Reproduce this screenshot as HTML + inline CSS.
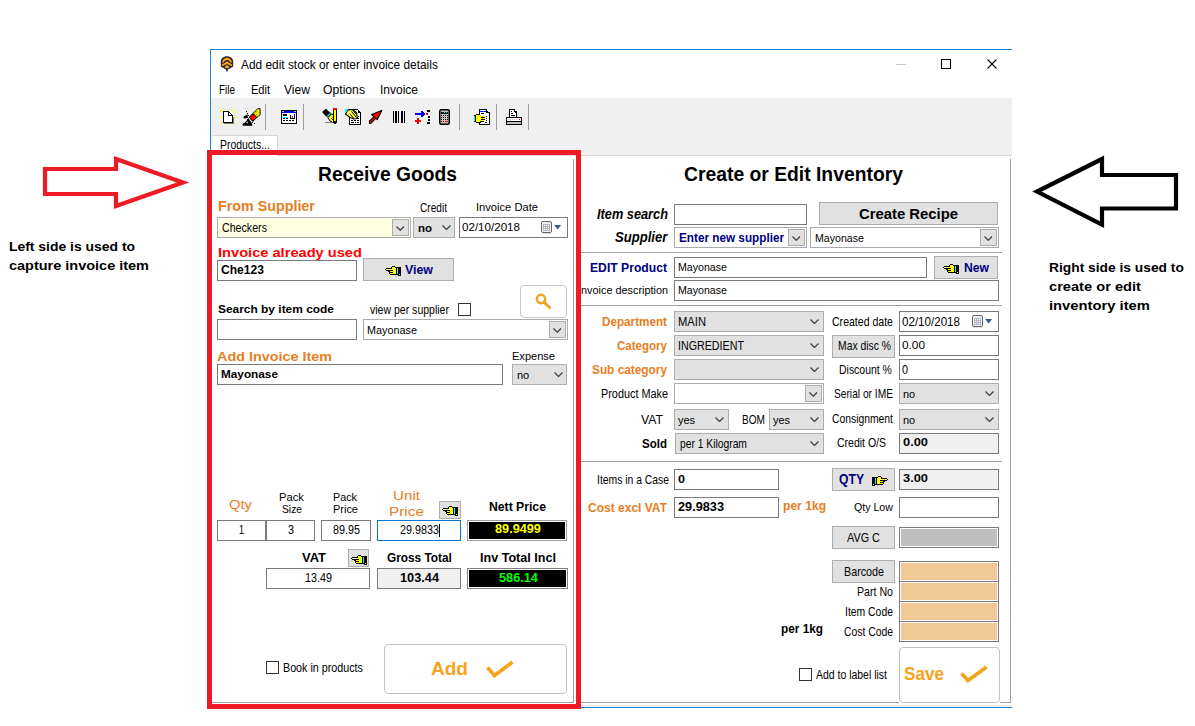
<!DOCTYPE html>
<html><head><meta charset="utf-8">
<style>
*{box-sizing:border-box;margin:0;padding:0}
html,body{width:1195px;height:726px;overflow:hidden;background:#fff;font-family:"Liberation Sans",sans-serif;color:#000;position:relative}
.t{position:absolute;white-space:nowrap;line-height:1;transform-origin:0 0}
.r{position:absolute}
</style></head><body>
<svg class="r" style="left:0;top:0" width="1195" height="726">
<polygon points="45,169 116,169 116,159 183,182.5 116,206 116,194 45,194" fill="none" stroke="#ed1c24" stroke-width="4.2" stroke-linejoin="miter"/>
<polygon points="1176,175 1102,175 1102,159 1037,191.5 1102,224.5 1102,208.5 1176,208.5" fill="none" stroke="#000" stroke-width="4.2" stroke-linejoin="miter"/>
</svg>
<div class="t" style="left:9.00px;top:240.25px;font-size:13.52px;font-weight:bold;font-style:normal;color:#000;transform:scaleX(1.0294)">Left side is used to</div>
<div class="t" style="left:9.00px;top:259.05px;font-size:13.52px;font-weight:bold;font-style:normal;color:#000;transform:scaleX(1.0710)">capture invoice item</div>
<div class="t" style="left:1049.00px;top:261.18px;font-size:13.37px;font-weight:bold;font-style:normal;color:#000;transform:scaleX(1.0323)">Right side is used to</div>
<div class="t" style="left:1049.00px;top:279.98px;font-size:13.37px;font-weight:bold;font-style:normal;color:#000;transform:scaleX(1.0955)">create or edit</div>
<div class="t" style="left:1049.00px;top:299.18px;font-size:13.37px;font-weight:bold;font-style:normal;color:#000;transform:scaleX(1.1050)">inventory item</div>
<div class="r" style="left:210px;top:49px;width:802px;height:1px;background:#1883d7;"></div>
<div class="r" style="left:210px;top:49px;width:1px;height:659px;background:#1883d7;"></div>
<div class="r" style="left:210px;top:707px;width:802px;height:1px;background:#1883d7;"></div>
<div class="r" style="left:211px;top:705px;width:801px;height:2px;background:#f0f0f0;"></div>
<svg class="r" style="left:217px;top:54px" width="20" height="20" viewBox="0 0 20 20">
<path d="M10,2.2 C13.6,2.2 16.2,4.6 16.2,7.6 L16.2,12.6 L11,15.4 L10.6,17.6 L9.4,17.6 L9,15.4 L3.8,12.6 L3.8,7.6 C3.8,4.6 6.4,2.2 10,2.2 Z" fill="#2e2536"/>
<path d="M5.1,8.2 C5.8,5.2 7.8,3.7 10,3.7 C12.2,3.7 14.2,5.2 14.9,8.2 L13.6,8.8 C12.6,6.8 11.4,6.1 10,6.1 C8.6,6.1 7.4,6.8 6.4,8.8 Z" fill="#f7a81b"/>
<path d="M4.9,10.6 L10,7.5 L15.1,10.6 L15.1,12.3 L10,10.0 L4.9,12.3 Z" fill="#f7a81b"/>
<path d="M8,13.4 C8,12 9,11.3 10,11.3 C11,11.3 12,12 12,13.4 L10,14.4 Z" fill="#f7a81b"/></svg>
<div class="t" style="left:241.00px;top:58.54px;font-size:12.35px;font-weight:normal;font-style:normal;color:#000;transform:scaleX(0.9626)">Add edit stock or enter invoice details</div>
<div class="r" style="left:896px;top:64px;width:10px;height:1px;background:#c8c8c8;"></div>
<div class="r" style="left:941px;top:59px;width:10px;height:10px;background:transparent;border:1px solid #000;"></div>
<svg class="r" style="left:987px;top:59px" width="10" height="10"><path d="M0.5,0.5 L9.5,9.5 M9.5,0.5 L0.5,9.5" stroke="#000" stroke-width="1.1"/></svg>
<div class="t" style="left:219.00px;top:83.54px;font-size:12.35px;font-weight:normal;font-style:normal;color:#000;transform:scaleX(0.8044)">File</div>
<div class="t" style="left:251.00px;top:83.54px;font-size:12.35px;font-weight:normal;font-style:normal;color:#000;transform:scaleX(0.8915)">Edit</div>
<div class="t" style="left:284.00px;top:83.54px;font-size:12.35px;font-weight:normal;font-style:normal;color:#000;transform:scaleX(0.9788)">View</div>
<div class="t" style="left:323.00px;top:83.54px;font-size:12.35px;font-weight:normal;font-style:normal;color:#000;transform:scaleX(0.9868)">Options</div>
<div class="t" style="left:380.00px;top:83.54px;font-size:12.35px;font-weight:normal;font-style:normal;color:#000;transform:scaleX(0.9703)">Invoice</div>
<div class="r" style="left:211px;top:98px;width:801px;height:57px;background:#f0f0f0;"></div>
<div class="r" style="left:211px;top:155px;width:801px;height:1px;background:#d9d9d9;"></div>
<div class="r" style="left:265px;top:104px;width:1px;height:26px;background:#a0a0a0;"></div>
<div class="r" style="left:303px;top:104px;width:1px;height:26px;background:#a0a0a0;"></div>
<div class="r" style="left:459px;top:104px;width:1px;height:26px;background:#a0a0a0;"></div>
<div class="r" style="left:496px;top:104px;width:1px;height:26px;background:#a0a0a0;"></div>
<div class="r" style="left:528px;top:104px;width:1px;height:26px;background:#a0a0a0;"></div>
<div class="r" style="left:212px;top:136px;width:65px;height:20px;background:#fff;"></div>
<div class="r" style="left:212px;top:135px;width:66px;height:1px;background:#d9d9d9;"></div>
<div class="r" style="left:277px;top:135px;width:1px;height:20px;background:#d9d9d9;"></div>
<div class="t" style="left:220.00px;top:139.29px;font-size:12.06px;font-weight:normal;font-style:normal;color:#000;transform:scaleX(0.8671)">Products...</div>
<svg class="r" style="left:219px;top:108px" width="18" height="18" viewBox="0 0 18 18" shape-rendering="crispEdges"><rect x="1" y="1" width="2" height="1" fill="#ffff00"/><rect x="2" y="2" width="2" height="1" fill="#ffff00"/><rect x="3" y="3" width="1" height="1" fill="#ffff00"/><rect x="8" y="1" width="1" height="2" fill="#ffff00"/><rect x="16" y="1" width="1" height="1" fill="#ffff00"/><rect x="15" y="2" width="1" height="1" fill="#ffff00"/><rect x="14" y="3" width="1" height="1" fill="#ffff00"/><rect x="13" y="4" width="1" height="1" fill="#ffff00"/><rect x="1" y="9" width="3" height="1" fill="#ffff00"/><rect x="15" y="9" width="3" height="1" fill="#ffff00"/><rect x="1" y="15" width="1" height="1" fill="#ffff00"/><rect x="2" y="14" width="1" height="1" fill="#ffff00"/><rect x="8" y="15" width="1" height="2" fill="#ffff00"/><rect x="16" y="15" width="1" height="1" fill="#ffff00"/><rect x="15" y="14" width="1" height="1" fill="#ffff00"/><rect x="4" y="3" width="6" height="12" fill="#fff"/><rect x="10" y="5" width="4" height="10" fill="#fff"/><rect x="10" y="4" width="1" height="1" fill="#fff"/><rect x="11" y="5" width="0" height="0" fill="#fff"/><rect x="4" y="3" width="6" height="1" fill="#000"/><rect x="4" y="3" width="1" height="12" fill="#000"/><rect x="4" y="14" width="10" height="1" fill="#000"/><rect x="13" y="8" width="1" height="7" fill="#000"/><rect x="9" y="3" width="1" height="5" fill="#000"/><rect x="9" y="7" width="5" height="1" fill="#000"/><rect x="10" y="4" width="1" height="1" fill="#000"/><rect x="11" y="5" width="1" height="1" fill="#000"/><rect x="12" y="6" width="1" height="1" fill="#000"/><rect x="13" y="7" width="1" height="1" fill="#000"/><rect x="5" y="15" width="10" height="1" fill="#808080"/><rect x="14" y="9" width="1" height="7" fill="#808080"/></svg>
<svg class="r" style="left:241px;top:106px" width="21" height="21" viewBox="0 0 21 21" shape-rendering="crispEdges"><g shape-rendering="auto"><polygon points="8.3,11.3 16.5,2.8 19,2.5 19.2,8.5 11.8,15.2" fill="#ffff00" stroke="#000" stroke-width="1"/><polygon points="8.3,11.3 12.2,7.6 15.7,11.3 11.8,15.2" fill="#ff0000" stroke="#000" stroke-width="1"/><path d="M13,8.5 L17,4.5 M14.5,10 L18.5,6" stroke="#000" stroke-width="0.7" stroke-dasharray="1 1"/><path d="M4,17.5 C2,17.5 2,19 2.5,19 L10.5,19 C10.5,17 8.5,16 7.5,13.5 C6,15.5 5.5,16.5 4,17.5 Z" fill="#000" stroke="#000" stroke-width="1.6"/><path d="M5,16.8 L6.8,15.2 L6.5,17.5 Z" fill="#fff"/><path d="M3.2,11.2 L6,9.5 L5.8,11.5 L3.5,11.8 Z" fill="#000" stroke="#000" stroke-width="1.4"/></g><rect x="5" y="5" width="1" height="1" fill="#000"/><rect x="6" y="7" width="1" height="1" fill="#000"/><rect x="7" y="9" width="1" height="1" fill="#000"/><rect x="6" y="11" width="1" height="1" fill="#000"/><rect x="6" y="13" width="1" height="1" fill="#000"/><rect x="11" y="16" width="1" height="1" fill="#000"/><rect x="13" y="17" width="1" height="1" fill="#000"/></svg>
<svg class="r" style="left:281px;top:110px" width="16" height="14" viewBox="0 0 16 14" shape-rendering="crispEdges"><rect x="0" y="0" width="16" height="14" fill="#000"/><rect x="1" y="1" width="14" height="12" fill="#fff"/><rect x="1" y="1" width="14" height="2" fill="#0000ff"/><rect x="1" y="1" width="2" height="1" fill="#c0c0c0"/><rect x="13" y="1" width="2" height="1" fill="#c0c0c0"/><rect x="2" y="4" width="4" height="2" fill="#000"/><rect x="2" y="8" width="2" height="1" fill="#000"/><rect x="5" y="8" width="2" height="1" fill="#000"/><rect x="2" y="10" width="2" height="1" fill="#000"/><rect x="5" y="10" width="2" height="1" fill="#000"/><rect x="8" y="10" width="2" height="1" fill="#000"/><rect x="11" y="10" width="2" height="1" fill="#000"/><rect x="9" y="5" width="1" height="4" fill="#000"/><rect x="9" y="8" width="5" height="1" fill="#000"/><rect x="2" y="7" width="5" height="1" fill="#00ffff"/><rect x="11" y="6" width="1" height="2" fill="#ff0000"/><rect x="13" y="4" width="1" height="4" fill="#0000ff"/></svg>
<svg class="r" style="left:322px;top:108px" width="16" height="16" viewBox="0 0 16 16" shape-rendering="crispEdges"><g shape-rendering="auto"><path d="M1,4 L4,1.5 L7,4.5 L4,7.5 Z" fill="#000" stroke="#000" stroke-width="1.2"/><path d="M4.5,8 L8,4.5 L9.5,6 L6,9.5 Z" fill="#00e0e0" stroke="#000" stroke-width="0.8"/><path d="M6,9.5 L9.5,6 L12,7 L12.5,12 L11,14.5 L8,13 Z" fill="#ffff40" stroke="#000" stroke-width="1"/><path d="M9,10 L11,12 M10,8.5 L12,10.5" stroke="#000" stroke-width="0.8"/></g><rect x="11" y="1" width="4" height="14" fill="#000"/><rect x="12" y="2" width="2" height="11" fill="#ffff00"/><rect x="11" y="0" width="4" height="2" fill="#ff0000"/><rect x="12" y="15" width="2" height="1" fill="#000"/><rect x="3" y="14" width="8" height="1" fill="#808080"/></svg>
<svg class="r" style="left:343px;top:108px" width="18" height="17" viewBox="0 0 18 17" shape-rendering="crispEdges"><rect x="6" y="1" width="12" height="16" fill="#000"/><rect x="7" y="2" width="10" height="14" fill="#fff"/><rect x="15" y="1" width="3" height="1" fill="#f0f0f0"/><rect x="16" y="2" width="2" height="1" fill="#f0f0f0"/><rect x="17" y="3" width="1" height="1" fill="#f0f0f0"/><rect x="14" y="1" width="1" height="1" fill="#000"/><rect x="15" y="2" width="1" height="1" fill="#000"/><rect x="16" y="3" width="1" height="1" fill="#000"/><rect x="17" y="4" width="1" height="1" fill="#000"/><rect x="15" y="3" width="1" height="2" fill="#000"/><rect x="15" y="4" width="2" height="1" fill="#000"/><rect x="15" y="8" width="1" height="1" fill="#000"/><rect x="15" y="10" width="1" height="1" fill="#000"/><rect x="8" y="12" width="2" height="1" fill="#000"/><rect x="11" y="12" width="2" height="1" fill="#000"/><rect x="14" y="12" width="2" height="1" fill="#000"/><rect x="8" y="14" width="3" height="1" fill="#000"/><rect x="12" y="14" width="1" height="1" fill="#000"/><rect x="14" y="14" width="2" height="1" fill="#000"/><g shape-rendering="auto"><polygon points="2,1 6,1 2,5" fill="#00ffff"/><polygon points="5.5,1.8 9.5,1.5 13.5,4.5 14.5,10.5 11,11 7,9.5 2.5,6" fill="#ffff40" stroke="#000" stroke-width="1.1" stroke-linejoin="round"/><path d="M8.5,3.5 L13.5,9.5 M6.5,5.5 L11,10.5 M10,2.5 L13,6" stroke="#000" stroke-width="1"/><path d="M4,3 L6,5.5 L8,4 L7,7" fill="none" stroke="#fff" stroke-width="0.6" opacity="0.6"/></g></svg>
<svg class="r" style="left:369px;top:110px" width="14" height="14" viewBox="0 0 14 14" shape-rendering="crispEdges"><g shape-rendering="auto"><path d="M1.2,12.2 L6.5,7" stroke="#000" stroke-width="3.6" stroke-linecap="round"/><path d="M1.2,12.2 L6.5,7" stroke="#ff0000" stroke-width="1.6" stroke-linecap="round"/><polygon points="12.8,0.6 2.6,4.6 8.3,9.6" fill="#ff0000" stroke="#000" stroke-width="1.1" stroke-linejoin="round"/></g></svg>
<svg class="r" style="left:393px;top:111px" width="12" height="12" viewBox="0 0 12 12" shape-rendering="crispEdges"><rect x="0" y="0" width="1" height="12" fill="#000"/><rect x="2" y="0" width="2" height="12" fill="#000"/><rect x="5" y="0" width="1" height="12" fill="#000"/><rect x="8" y="0" width="2" height="12" fill="#000"/><rect x="11" y="0" width="1" height="12" fill="#000"/></svg>
<svg class="r" style="left:415px;top:110px" width="15" height="14" viewBox="0 0 15 14" shape-rendering="crispEdges"><rect x="0" y="3" width="8" height="2" fill="#0000ff"/><rect x="6" y="1" width="2" height="6" fill="#0000ff"/><rect x="8" y="2" width="1" height="4" fill="#0000ff"/><rect x="9" y="3" width="1" height="2" fill="#0000ff"/><rect x="11" y="3" width="2" height="2" fill="#ff0000"/><rect x="12" y="0" width="3" height="2" fill="#000"/><rect x="13" y="6" width="2" height="2" fill="#000"/><rect x="13" y="9" width="2" height="2" fill="#000"/><rect x="12" y="12" width="3" height="2" fill="#000"/><rect x="2" y="8" width="2" height="6" fill="#ff0000"/><rect x="0" y="10" width="6" height="2" fill="#ff0000"/></svg>
<svg class="r" style="left:439px;top:109px" width="11" height="16" viewBox="0 0 11 16" shape-rendering="crispEdges"><rect x="0.75" y="0.75" width="9.5" height="14.5" rx="1.5" fill="#c0c0c0" stroke="#000" stroke-width="1.5" shape-rendering="auto"/><rect x="2" y="3" width="7" height="2" fill="#000"/><rect x="5" y="3" width="1" height="1" fill="#00ffff"/><rect x="7" y="3" width="1" height="1" fill="#00ffff"/><rect x="2" y="6" width="1" height="1" fill="#000"/><rect x="4" y="6" width="1" height="1" fill="#000"/><rect x="6" y="6" width="1" height="1" fill="#000"/><rect x="8" y="6" width="1" height="1" fill="#000"/><rect x="2" y="8" width="1" height="1" fill="#000"/><rect x="4" y="8" width="1" height="1" fill="#000"/><rect x="6" y="8" width="1" height="1" fill="#000"/><rect x="8" y="8" width="1" height="1" fill="#000"/><rect x="2" y="10" width="1" height="1" fill="#000"/><rect x="4" y="10" width="1" height="1" fill="#000"/><rect x="6" y="10" width="1" height="1" fill="#000"/><rect x="8" y="10" width="1" height="1" fill="#000"/><rect x="2" y="12" width="1" height="1" fill="#000"/><rect x="4" y="12" width="1" height="1" fill="#000"/><rect x="6" y="12" width="3" height="1" fill="#ff0000"/></svg>
<svg class="r" style="left:474px;top:109px" width="16" height="16" viewBox="0 0 16 16" shape-rendering="crispEdges"><rect x="5" y="0" width="11" height="16" fill="#000"/><rect x="6" y="1" width="9" height="14" fill="#fff"/><rect x="13" y="0" width="3" height="3" fill="#f0f0f0"/><rect x="12" y="1" width="1" height="3" fill="#000"/><rect x="12" y="3" width="3" height="1" fill="#000"/><rect x="13" y="2" width="1" height="1" fill="#000"/><rect x="6" y="2" width="6" height="1" fill="#0000ff"/><rect x="7" y="4" width="3" height="1" fill="#000"/><rect x="12" y="7" width="1" height="1" fill="#000"/><rect x="12" y="9" width="1" height="1" fill="#000"/><rect x="12" y="11" width="1" height="1" fill="#000"/><rect x="11" y="13" width="2" height="1" fill="#000"/><rect x="0" y="6" width="2" height="7" fill="#000"/><rect x="0" y="7" width="1" height="5" fill="#00ffff"/><rect x="2" y="6" width="5" height="7" fill="#ffff00"/><rect x="7" y="7" width="3" height="1" fill="#ffff00"/><rect x="7" y="9" width="3" height="1" fill="#ffff00"/><rect x="7" y="11" width="3" height="1" fill="#ffff00"/><rect x="2" y="5" width="4" height="1" fill="#000"/><rect x="7" y="8" width="4" height="1" fill="#000"/><rect x="7" y="10" width="4" height="1" fill="#000"/><rect x="6" y="12" width="4" height="1" fill="#000"/><rect x="2" y="13" width="5" height="1" fill="#000"/></svg>
<svg class="r" style="left:506px;top:109px" width="16" height="16" viewBox="0 0 16 16" shape-rendering="crispEdges"><rect x="3" y="0" width="8" height="9" fill="#000"/><rect x="4" y="1" width="6" height="7" fill="#fff"/><rect x="9" y="0" width="2" height="2" fill="#f0f0f0"/><rect x="8" y="1" width="1" height="2" fill="#000"/><rect x="8" y="2" width="2" height="1" fill="#000"/><rect x="9" y="3" width="2" height="1" fill="#000"/><rect x="5" y="2" width="1" height="1" fill="#000"/><rect x="5" y="4" width="2" height="1" fill="#000"/><rect x="5" y="6" width="4" height="1" fill="#000"/><rect x="0" y="8" width="16" height="8" fill="#000"/><rect x="1" y="9" width="14" height="3" fill="#fff"/><rect x="1" y="13" width="14" height="2" fill="#c0c0c0"/><rect x="13" y="10" width="1" height="1" fill="#ff0000"/><rect x="2" y="10" width="1" height="1" fill="#c0c0c0"/><rect x="4" y="10" width="1" height="1" fill="#c0c0c0"/><rect x="6" y="10" width="1" height="1" fill="#c0c0c0"/><rect x="8" y="10" width="1" height="1" fill="#c0c0c0"/><rect x="10" y="10" width="1" height="1" fill="#c0c0c0"/></svg>
<div class="r" style="left:573px;top:159px;width:1px;height:544px;background:#a0a0a0;"></div>
<div class="r" style="left:212px;top:702px;width:362px;height:1px;background:#a0a0a0;"></div>
<div class="r" style="left:1010px;top:159px;width:1px;height:544px;background:#a0a0a0;"></div>
<div class="r" style="left:581px;top:702px;width:318px;height:1px;background:#a0a0a0;"></div>
<div class="r" style="left:581px;top:252px;width:421px;height:1px;background:#a0a0a0;"></div>
<div class="r" style="left:581px;top:305px;width:421px;height:1px;background:#a0a0a0;"></div>
<div class="r" style="left:581px;top:461px;width:421px;height:1px;background:#a0a0a0;"></div>
<div class="t" style="left:318.00px;top:165.33px;font-size:19.33px;font-weight:bold;font-style:normal;color:#000;transform:scaleX(0.9952)">Receive Goods</div>
<div class="t" style="left:218.00px;top:198.92px;font-size:14.39px;font-weight:bold;font-style:normal;color:#e67e22;transform:scaleX(0.9942)">From Supplier</div>
<div class="t" style="left:420.00px;top:202.49px;font-size:12.06px;font-weight:normal;font-style:normal;color:#000;transform:scaleX(0.8382)">Credit</div>
<div class="t" style="left:476.00px;top:201.25px;font-size:11.63px;font-weight:normal;font-style:normal;color:#000;transform:scaleX(0.9590)">Invoice Date</div>
<div class="r" style="left:217px;top:217px;width:194px;height:21px;background:#ffffe1;border:1px solid #a8abb2;"></div>
<div class="r" style="left:392px;top:219px;width:17px;height:17px;background:#e1e1e1;border:1px solid #adadad;"></div>
<svg class="r" style="left:396.1px;top:225.6px" width="8.5" height="5.25"><polyline points="0.5,0.5 4.25,4.25 8.0,0.5" fill="none" stroke="#404040" stroke-width="1.25"/></svg>
<div class="t" style="left:222.00px;top:221.99px;font-size:12.65px;font-weight:normal;font-style:normal;color:#000;transform:scaleX(0.8423)">Checkers</div>
<div class="r" style="left:413px;top:217px;width:42px;height:21px;background:#e1e1e1;border:1px solid #adadad;"></div>
<svg class="r" style="left:441.5px;top:224.8px" width="9" height="5.5"><polyline points="0.5,0.5 4.5,4.5 8.5,0.5" fill="none" stroke="#404040" stroke-width="1.25"/></svg>
<div class="t" style="left:418.00px;top:222.86px;font-size:11.50px;font-weight:bold;font-style:normal;color:#000;transform:scaleX(1.0000)">no</div>
<div class="r" style="left:459px;top:217px;width:109px;height:21px;background:#fff;border:1px solid #7a7a7a;"></div>
<div class="t" style="left:462.00px;top:221.45px;font-size:11.63px;font-weight:normal;font-style:normal;color:#000;transform:scaleX(0.9966)">02/10/2018</div>
<svg class="r" style="left:541px;top:221px" width="21" height="13" viewBox="0 0 21 13">
<rect x="0.5" y="0.5" width="10" height="11" rx="1.5" fill="#eef2fa" stroke="#6e6262"/>
<rect x="2" y="3" width="7" height="7" fill="#b4b8c4"/>
<path d="M3,4h1v1h-1zM5,4h1v1h-1zM7,4h1v1h-1zM3,6h1v1h-1zM5,6h1v1h-1zM7,6h1v1h-1zM3,8h1v1h-1zM5,8h1v1h-1zM7,8h1v1h-1z" fill="#fff"/>
<rect x="1" y="12" width="10" height="1" fill="#e0e0e0"/>
<path d="M13.1,4.1 L20.1,4.1 L16.6,8.5 Z" fill="#3b5a8a"/></svg>
<div class="t" style="left:218.00px;top:246.25px;font-size:13.52px;font-weight:bold;font-style:normal;color:#ff0000;transform:scaleX(1.0826)">Invoice already used</div>
<div class="r" style="left:217px;top:260px;width:140px;height:21px;background:#fff;border:1px solid #7a7a7a;"></div>
<div class="t" style="left:221.00px;top:263.79px;font-size:12.65px;font-weight:bold;font-style:normal;color:#000;transform:scaleX(0.9552)">Che123</div>
<div class="r" style="left:363px;top:258px;width:91px;height:23px;background:#e1e1e1;border:1px solid #adadad;"></div>
<svg class="r" style="left:385px;top:266px" width="16" height="10" shape-rendering="crispEdges"><rect x="7" y="0" width="3" height="1" fill="#000"/><rect x="6" y="1" width="1" height="1" fill="#000"/><rect x="7" y="1" width="3" height="1" fill="#ffff00"/><rect x="10" y="1" width="6" height="1" fill="#000"/><rect x="1" y="2" width="6" height="1" fill="#000"/><rect x="7" y="2" width="4" height="1" fill="#ffff00"/><rect x="11" y="2" width="1" height="1" fill="#000"/><rect x="12" y="2" width="1" height="1" fill="#00ffff"/><rect x="13" y="2" width="3" height="1" fill="#000"/><rect x="0" y="3" width="1" height="1" fill="#000"/><rect x="1" y="3" width="1" height="1" fill="#ffff00"/><rect x="2" y="3" width="1" height="1" fill="#ffffff"/><rect x="3" y="3" width="1" height="1" fill="#ffff00"/><rect x="4" y="3" width="1" height="1" fill="#ffffff"/><rect x="5" y="3" width="1" height="1" fill="#ffff00"/><rect x="6" y="3" width="1" height="1" fill="#ffffff"/><rect x="7" y="3" width="4" height="1" fill="#ffff00"/><rect x="11" y="3" width="1" height="1" fill="#000"/><rect x="12" y="3" width="1" height="1" fill="#00ffff"/><rect x="13" y="3" width="3" height="1" fill="#000"/><rect x="1" y="4" width="7" height="1" fill="#000"/><rect x="8" y="4" width="3" height="1" fill="#ffff00"/><rect x="11" y="4" width="1" height="1" fill="#000"/><rect x="12" y="4" width="1" height="1" fill="#00ffff"/><rect x="13" y="4" width="3" height="1" fill="#000"/><rect x="3" y="5" width="2" height="1" fill="#000"/><rect x="5" y="5" width="6" height="1" fill="#ffff00"/><rect x="11" y="5" width="1" height="1" fill="#000"/><rect x="12" y="5" width="1" height="1" fill="#00ffff"/><rect x="13" y="5" width="3" height="1" fill="#000"/><rect x="4" y="6" width="4" height="1" fill="#000"/><rect x="8" y="6" width="3" height="1" fill="#ffff00"/><rect x="11" y="6" width="1" height="1" fill="#000"/><rect x="12" y="6" width="1" height="1" fill="#00ffff"/><rect x="13" y="6" width="3" height="1" fill="#000"/><rect x="4" y="7" width="1" height="1" fill="#000"/><rect x="5" y="7" width="6" height="1" fill="#ffff00"/><rect x="11" y="7" width="1" height="1" fill="#000"/><rect x="12" y="7" width="1" height="1" fill="#00ffff"/><rect x="13" y="7" width="3" height="1" fill="#000"/><rect x="5" y="8" width="9" height="1" fill="#000"/><rect x="14" y="8" width="1" height="1" fill="#ffff00"/><rect x="15" y="8" width="1" height="1" fill="#000"/><rect x="13" y="9" width="3" height="1" fill="#000"/></svg>
<div class="t" style="left:405.00px;top:263.95px;font-size:12.94px;font-weight:bold;font-style:normal;color:#000080;transform:scaleX(0.9556)">View</div>
<div class="r" style="left:520px;top:285px;width:47px;height:33px;background:#fff;border:1px solid #c8c8c8;border-radius:4px;"></div>
<svg class="r" style="left:535px;top:293px" width="16" height="16"><circle cx="6" cy="6" r="4.2" fill="none" stroke="#f5a01a" stroke-width="2.4"/><path d="M9,9 L14.5,14.5" stroke="#f5a01a" stroke-width="2.8" stroke-linecap="round"/></svg>
<div class="t" style="left:218.00px;top:302.95px;font-size:11.63px;font-weight:bold;font-style:normal;color:#000;transform:scaleX(1.0258)">Search by item code</div>
<div class="t" style="left:370.00px;top:304.42px;font-size:12.50px;font-weight:normal;font-style:normal;color:#000;transform:scaleX(0.8421)">view per supplier</div>
<div class="r" style="left:458px;top:303px;width:13px;height:13px;background:#fff;border:1px solid #333;"></div>
<div class="r" style="left:217px;top:319px;width:140px;height:21px;background:#fff;border:1px solid #7a7a7a;"></div>
<div class="r" style="left:363px;top:319px;width:205px;height:21px;background:#fff;border:1px solid #a8abb2;"></div>
<div class="r" style="left:549px;top:321px;width:17px;height:17px;background:#e1e1e1;border:1px solid #adadad;"></div>
<svg class="r" style="left:553.0px;top:327.6px" width="8.5" height="5.25"><polyline points="0.5,0.5 4.25,4.25 8.0,0.5" fill="none" stroke="#404040" stroke-width="1.25"/></svg>
<div class="t" style="left:367.00px;top:324.15px;font-size:11.63px;font-weight:normal;font-style:normal;color:#000;transform:scaleX(0.9317)">Mayonase</div>
<div class="t" style="left:217.00px;top:350.25px;font-size:13.52px;font-weight:bold;font-style:normal;color:#e67e22;transform:scaleX(1.0634)">Add Invoice Item</div>
<div class="t" style="left:512.00px;top:350.87px;font-size:10.90px;font-weight:normal;font-style:normal;color:#000;transform:scaleX(1.0140)">Expense</div>
<div class="r" style="left:217px;top:364px;width:286px;height:21px;background:#fff;border:1px solid #7a7a7a;"></div>
<div class="t" style="left:221.00px;top:367.83px;font-size:11.77px;font-weight:bold;font-style:normal;color:#000;transform:scaleX(1.0013)">Mayonase</div>
<div class="r" style="left:512px;top:364px;width:55px;height:21px;background:#e1e1e1;border:1px solid #adadad;"></div>
<svg class="r" style="left:553.5px;top:371.8px" width="9" height="5.5"><polyline points="0.5,0.5 4.5,4.5 8.5,0.5" fill="none" stroke="#404040" stroke-width="1.25"/></svg>
<div class="t" style="left:517.00px;top:370.39px;font-size:11.00px;font-weight:normal;font-style:normal;color:#000;transform:scaleX(1.0000)">no</div>
<div class="t" style="left:229.00px;top:498.45px;font-size:13.52px;font-weight:normal;font-style:normal;color:#e67e22;transform:scaleX(1.0942)">Qty</div>
<div class="t" style="left:279.00px;top:492.00px;font-size:11.34px;font-weight:normal;font-style:normal;color:#000;transform:scaleX(0.9888)">Pack</div>
<div class="t" style="left:282.00px;top:504.66px;font-size:10.32px;font-weight:normal;font-style:normal;color:#000;transform:scaleX(0.9964)">Size</div>
<div class="t" style="left:333.00px;top:492.00px;font-size:11.34px;font-weight:normal;font-style:normal;color:#000;transform:scaleX(0.9493)">Pack</div>
<div class="t" style="left:333.00px;top:504.66px;font-size:10.32px;font-weight:normal;font-style:normal;color:#000;transform:scaleX(1.0625)">Price</div>
<div class="t" style="left:393.00px;top:489.77px;font-size:12.79px;font-weight:normal;font-style:normal;color:#e67e22;transform:scaleX(1.1859)">Unit</div>
<div class="t" style="left:389.00px;top:505.97px;font-size:12.79px;font-weight:normal;font-style:normal;color:#e67e22;transform:scaleX(1.2001)">Price</div>
<div class="r" style="left:439px;top:501px;width:22px;height:18px;background:#e1e1e1;border:1px solid #adadad;"></div>
<svg class="r" style="left:442px;top:506px" width="16" height="10" shape-rendering="crispEdges"><rect x="7" y="0" width="3" height="1" fill="#000"/><rect x="6" y="1" width="1" height="1" fill="#000"/><rect x="7" y="1" width="3" height="1" fill="#ffff00"/><rect x="10" y="1" width="6" height="1" fill="#000"/><rect x="1" y="2" width="6" height="1" fill="#000"/><rect x="7" y="2" width="4" height="1" fill="#ffff00"/><rect x="11" y="2" width="1" height="1" fill="#000"/><rect x="12" y="2" width="1" height="1" fill="#00ffff"/><rect x="13" y="2" width="3" height="1" fill="#000"/><rect x="0" y="3" width="1" height="1" fill="#000"/><rect x="1" y="3" width="1" height="1" fill="#ffff00"/><rect x="2" y="3" width="1" height="1" fill="#ffffff"/><rect x="3" y="3" width="1" height="1" fill="#ffff00"/><rect x="4" y="3" width="1" height="1" fill="#ffffff"/><rect x="5" y="3" width="1" height="1" fill="#ffff00"/><rect x="6" y="3" width="1" height="1" fill="#ffffff"/><rect x="7" y="3" width="4" height="1" fill="#ffff00"/><rect x="11" y="3" width="1" height="1" fill="#000"/><rect x="12" y="3" width="1" height="1" fill="#00ffff"/><rect x="13" y="3" width="3" height="1" fill="#000"/><rect x="1" y="4" width="7" height="1" fill="#000"/><rect x="8" y="4" width="3" height="1" fill="#ffff00"/><rect x="11" y="4" width="1" height="1" fill="#000"/><rect x="12" y="4" width="1" height="1" fill="#00ffff"/><rect x="13" y="4" width="3" height="1" fill="#000"/><rect x="3" y="5" width="2" height="1" fill="#000"/><rect x="5" y="5" width="6" height="1" fill="#ffff00"/><rect x="11" y="5" width="1" height="1" fill="#000"/><rect x="12" y="5" width="1" height="1" fill="#00ffff"/><rect x="13" y="5" width="3" height="1" fill="#000"/><rect x="4" y="6" width="4" height="1" fill="#000"/><rect x="8" y="6" width="3" height="1" fill="#ffff00"/><rect x="11" y="6" width="1" height="1" fill="#000"/><rect x="12" y="6" width="1" height="1" fill="#00ffff"/><rect x="13" y="6" width="3" height="1" fill="#000"/><rect x="4" y="7" width="1" height="1" fill="#000"/><rect x="5" y="7" width="6" height="1" fill="#ffff00"/><rect x="11" y="7" width="1" height="1" fill="#000"/><rect x="12" y="7" width="1" height="1" fill="#00ffff"/><rect x="13" y="7" width="3" height="1" fill="#000"/><rect x="5" y="8" width="9" height="1" fill="#000"/><rect x="14" y="8" width="1" height="1" fill="#ffff00"/><rect x="15" y="8" width="1" height="1" fill="#000"/><rect x="13" y="9" width="3" height="1" fill="#000"/></svg>
<div class="t" style="left:489.00px;top:501.17px;font-size:12.79px;font-weight:bold;font-style:normal;color:#000;transform:scaleX(0.9542)">Nett Price</div>
<div class="r" style="left:217px;top:520px;width:49px;height:21px;background:#fff;border:1px solid #7a7a7a;"></div>
<div class="r" style="left:266px;top:520px;width:49px;height:21px;background:#fff;border:1px solid #7a7a7a;"></div>
<div class="r" style="left:321px;top:520px;width:50px;height:21px;background:#fff;border:1px solid #7a7a7a;"></div>
<div class="r" style="left:377px;top:520px;width:84px;height:21px;background:#fff;border:1px solid #0078d7;"></div>
<div class="r" style="left:467px;top:520px;width:100px;height:21px;background:#000;border:1px solid #a0a0a0;box-shadow:inset 0 0 0 1px #fff"></div>
<div class="t" style="left:239.00px;top:523.52px;font-size:12.50px;font-weight:normal;font-style:normal;color:#000;transform:scaleX(0.7207)">1</div>
<div class="t" style="left:288.00px;top:523.52px;font-size:12.50px;font-weight:normal;font-style:normal;color:#000;transform:scaleX(0.8649)">3</div>
<div class="t" style="left:333.00px;top:523.52px;font-size:12.50px;font-weight:normal;font-style:normal;color:#000;transform:scaleX(0.8623)">89.95</div>
<div class="t" style="left:400.00px;top:523.52px;font-size:12.50px;font-weight:normal;font-style:normal;color:#000;transform:scaleX(0.8631)">29.9833</div>
<div class="r" style="left:439px;top:524px;width:1px;height:13px;background:#000;"></div>
<div class="t" style="left:495.00px;top:523.09px;font-size:12.06px;font-weight:bold;font-style:normal;color:#ffff00;transform:scaleX(1.0548)">89.9499</div>
<div class="t" style="left:302.00px;top:552.49px;font-size:12.06px;font-weight:bold;font-style:normal;color:#000;transform:scaleX(1.0753)">VAT</div>
<div class="r" style="left:348px;top:549px;width:21px;height:18px;background:#e1e1e1;border:1px solid #adadad;"></div>
<svg class="r" style="left:351px;top:555px" width="16" height="10" shape-rendering="crispEdges"><rect x="7" y="0" width="3" height="1" fill="#000"/><rect x="6" y="1" width="1" height="1" fill="#000"/><rect x="7" y="1" width="3" height="1" fill="#ffff00"/><rect x="10" y="1" width="6" height="1" fill="#000"/><rect x="1" y="2" width="6" height="1" fill="#000"/><rect x="7" y="2" width="4" height="1" fill="#ffff00"/><rect x="11" y="2" width="1" height="1" fill="#000"/><rect x="12" y="2" width="1" height="1" fill="#00ffff"/><rect x="13" y="2" width="3" height="1" fill="#000"/><rect x="0" y="3" width="1" height="1" fill="#000"/><rect x="1" y="3" width="1" height="1" fill="#ffff00"/><rect x="2" y="3" width="1" height="1" fill="#ffffff"/><rect x="3" y="3" width="1" height="1" fill="#ffff00"/><rect x="4" y="3" width="1" height="1" fill="#ffffff"/><rect x="5" y="3" width="1" height="1" fill="#ffff00"/><rect x="6" y="3" width="1" height="1" fill="#ffffff"/><rect x="7" y="3" width="4" height="1" fill="#ffff00"/><rect x="11" y="3" width="1" height="1" fill="#000"/><rect x="12" y="3" width="1" height="1" fill="#00ffff"/><rect x="13" y="3" width="3" height="1" fill="#000"/><rect x="1" y="4" width="7" height="1" fill="#000"/><rect x="8" y="4" width="3" height="1" fill="#ffff00"/><rect x="11" y="4" width="1" height="1" fill="#000"/><rect x="12" y="4" width="1" height="1" fill="#00ffff"/><rect x="13" y="4" width="3" height="1" fill="#000"/><rect x="3" y="5" width="2" height="1" fill="#000"/><rect x="5" y="5" width="6" height="1" fill="#ffff00"/><rect x="11" y="5" width="1" height="1" fill="#000"/><rect x="12" y="5" width="1" height="1" fill="#00ffff"/><rect x="13" y="5" width="3" height="1" fill="#000"/><rect x="4" y="6" width="4" height="1" fill="#000"/><rect x="8" y="6" width="3" height="1" fill="#ffff00"/><rect x="11" y="6" width="1" height="1" fill="#000"/><rect x="12" y="6" width="1" height="1" fill="#00ffff"/><rect x="13" y="6" width="3" height="1" fill="#000"/><rect x="4" y="7" width="1" height="1" fill="#000"/><rect x="5" y="7" width="6" height="1" fill="#ffff00"/><rect x="11" y="7" width="1" height="1" fill="#000"/><rect x="12" y="7" width="1" height="1" fill="#00ffff"/><rect x="13" y="7" width="3" height="1" fill="#000"/><rect x="5" y="8" width="9" height="1" fill="#000"/><rect x="14" y="8" width="1" height="1" fill="#ffff00"/><rect x="15" y="8" width="1" height="1" fill="#000"/><rect x="13" y="9" width="3" height="1" fill="#000"/></svg>
<div class="t" style="left:387.00px;top:552.49px;font-size:12.06px;font-weight:bold;font-style:normal;color:#000;transform:scaleX(0.9823)">Gross Total</div>
<div class="t" style="left:480.00px;top:551.56px;font-size:12.21px;font-weight:bold;font-style:normal;color:#000;transform:scaleX(1.0306)">Inv Total Incl</div>
<div class="r" style="left:266px;top:568px;width:104px;height:21px;background:#fff;border:1px solid #7a7a7a;"></div>
<div class="t" style="left:305.00px;top:571.56px;font-size:12.21px;font-weight:normal;font-style:normal;color:#000;transform:scaleX(0.8828)">13.49</div>
<div class="r" style="left:377px;top:568px;width:84px;height:21px;background:#f0f0f0;border:1px solid #7a7a7a;"></div>
<div class="t" style="left:400.00px;top:571.56px;font-size:12.21px;font-weight:bold;font-style:normal;color:#000;transform:scaleX(1.0439)">103.44</div>
<div class="r" style="left:467px;top:568px;width:101px;height:21px;background:#000;border:1px solid #808080;box-shadow:inset 0 0 0 1px #fff"></div>
<div class="t" style="left:499.00px;top:572.07px;font-size:12.79px;font-weight:bold;font-style:normal;color:#00ff00;transform:scaleX(0.9964)">586.14</div>
<div class="r" style="left:266px;top:661px;width:13px;height:13px;background:#fff;border:1px solid #333;"></div>
<div class="t" style="left:283.00px;top:662.17px;font-size:12.79px;font-weight:normal;font-style:normal;color:#000;transform:scaleX(0.8395)">Book in products</div>
<div class="r" style="left:384px;top:644px;width:183px;height:50px;background:#fff;border:1px solid #c3c3c3;border-radius:4px;"></div>
<div class="t" style="left:431.00px;top:659.80px;font-size:18.90px;font-weight:bold;font-style:normal;color:#f5a31a;transform:scaleX(1.0067)">Add</div>
<svg class="r" style="left:484px;top:658px" width="32" height="22"><polyline points="3.5,9.5 10.5,17.5 28.5,4" fill="none" stroke="#f5a31a" stroke-width="3.6"/></svg>
<div class="t" style="left:684.00px;top:165.11px;font-size:19.48px;font-weight:bold;font-style:normal;color:#000;transform:scaleX(0.9920)">Create or Edit Inventory</div>
<div class="t" style="left:597.00px;top:206.67px;font-size:14.68px;font-weight:bold;font-style:italic;color:#000;transform:scaleX(0.8698)">Item search</div>
<div class="r" style="left:674px;top:204px;width:133px;height:21px;background:#fff;border:1px solid #7a7a7a;"></div>
<div class="r" style="left:819px;top:202px;width:179px;height:23px;background:#e1e1e1;border:1px solid #adadad;"></div>
<div class="t" style="left:859.00px;top:206.76px;font-size:14.10px;font-weight:bold;font-style:normal;color:#000;transform:scaleX(1.0527)">Create Recipe</div>
<div class="t" style="left:615.00px;top:229.77px;font-size:14.68px;font-weight:bold;font-style:italic;color:#000;transform:scaleX(0.8925)">Supplier</div>
<div class="r" style="left:674px;top:227px;width:133px;height:21px;background:#fff;border:1px solid #a8abb2;"></div>
<div class="r" style="left:788px;top:229px;width:17px;height:17px;background:#e1e1e1;border:1px solid #adadad;"></div>
<svg class="r" style="left:792.0px;top:235.6px" width="8.5" height="5.25"><polyline points="0.5,0.5 4.25,4.25 8.0,0.5" fill="none" stroke="#404040" stroke-width="1.25"/></svg>
<div class="t" style="left:679.00px;top:231.62px;font-size:12.50px;font-weight:bold;font-style:normal;color:#000080;transform:scaleX(0.9391)">Enter new supplier</div>
<div class="r" style="left:810px;top:227px;width:189px;height:21px;background:#fff;border:1px solid #a8abb2;"></div>
<div class="r" style="left:980px;top:229px;width:17px;height:17px;background:#e1e1e1;border:1px solid #adadad;"></div>
<svg class="r" style="left:984.0px;top:235.6px" width="8.5" height="5.25"><polyline points="0.5,0.5 4.25,4.25 8.0,0.5" fill="none" stroke="#404040" stroke-width="1.25"/></svg>
<div class="t" style="left:815.00px;top:231.83px;font-size:11.77px;font-weight:normal;font-style:normal;color:#000;transform:scaleX(0.9018)">Mayonase</div>
<div class="t" style="left:590.00px;top:261.99px;font-size:12.65px;font-weight:bold;font-style:normal;color:#000080;transform:scaleX(0.9612)">EDIT Product</div>
<div class="r" style="left:674px;top:257px;width:253px;height:21px;background:#fff;border:1px solid #7a7a7a;"></div>
<div class="t" style="left:678.00px;top:261.15px;font-size:11.63px;font-weight:normal;font-style:normal;color:#000;transform:scaleX(0.9131)">Mayonase</div>
<div class="r" style="left:934px;top:256px;width:64px;height:23px;background:#e1e1e1;border:1px solid #adadad;"></div>
<svg class="r" style="left:943px;top:264px" width="16" height="10" shape-rendering="crispEdges"><rect x="7" y="0" width="3" height="1" fill="#000"/><rect x="6" y="1" width="1" height="1" fill="#000"/><rect x="7" y="1" width="3" height="1" fill="#ffff00"/><rect x="10" y="1" width="6" height="1" fill="#000"/><rect x="1" y="2" width="6" height="1" fill="#000"/><rect x="7" y="2" width="4" height="1" fill="#ffff00"/><rect x="11" y="2" width="1" height="1" fill="#000"/><rect x="12" y="2" width="1" height="1" fill="#00ffff"/><rect x="13" y="2" width="3" height="1" fill="#000"/><rect x="0" y="3" width="1" height="1" fill="#000"/><rect x="1" y="3" width="1" height="1" fill="#ffff00"/><rect x="2" y="3" width="1" height="1" fill="#ffffff"/><rect x="3" y="3" width="1" height="1" fill="#ffff00"/><rect x="4" y="3" width="1" height="1" fill="#ffffff"/><rect x="5" y="3" width="1" height="1" fill="#ffff00"/><rect x="6" y="3" width="1" height="1" fill="#ffffff"/><rect x="7" y="3" width="4" height="1" fill="#ffff00"/><rect x="11" y="3" width="1" height="1" fill="#000"/><rect x="12" y="3" width="1" height="1" fill="#00ffff"/><rect x="13" y="3" width="3" height="1" fill="#000"/><rect x="1" y="4" width="7" height="1" fill="#000"/><rect x="8" y="4" width="3" height="1" fill="#ffff00"/><rect x="11" y="4" width="1" height="1" fill="#000"/><rect x="12" y="4" width="1" height="1" fill="#00ffff"/><rect x="13" y="4" width="3" height="1" fill="#000"/><rect x="3" y="5" width="2" height="1" fill="#000"/><rect x="5" y="5" width="6" height="1" fill="#ffff00"/><rect x="11" y="5" width="1" height="1" fill="#000"/><rect x="12" y="5" width="1" height="1" fill="#00ffff"/><rect x="13" y="5" width="3" height="1" fill="#000"/><rect x="4" y="6" width="4" height="1" fill="#000"/><rect x="8" y="6" width="3" height="1" fill="#ffff00"/><rect x="11" y="6" width="1" height="1" fill="#000"/><rect x="12" y="6" width="1" height="1" fill="#00ffff"/><rect x="13" y="6" width="3" height="1" fill="#000"/><rect x="4" y="7" width="1" height="1" fill="#000"/><rect x="5" y="7" width="6" height="1" fill="#ffff00"/><rect x="11" y="7" width="1" height="1" fill="#000"/><rect x="12" y="7" width="1" height="1" fill="#00ffff"/><rect x="13" y="7" width="3" height="1" fill="#000"/><rect x="5" y="8" width="9" height="1" fill="#000"/><rect x="14" y="8" width="1" height="1" fill="#ffff00"/><rect x="15" y="8" width="1" height="1" fill="#000"/><rect x="13" y="9" width="3" height="1" fill="#000"/></svg>
<div class="t" style="left:964.00px;top:261.52px;font-size:12.50px;font-weight:bold;font-style:normal;color:#000080;transform:scaleX(0.9709)">New</div>
<div class="t" style="left:578.00px;top:284.35px;font-size:11.63px;font-weight:normal;font-style:normal;color:#000;transform:scaleX(0.9348)">Invoice description</div>
<div class="r" style="left:674px;top:280px;width:325px;height:21px;background:#fff;border:1px solid #7a7a7a;"></div>
<div class="t" style="left:678.00px;top:284.35px;font-size:11.63px;font-weight:normal;font-style:normal;color:#000;transform:scaleX(0.9131)">Mayonase</div>
<div class="t" style="left:602.00px;top:314.90px;font-size:13.23px;font-weight:bold;font-style:normal;color:#e67e22;transform:scaleX(0.8846)">Department</div>
<div class="r" style="left:674px;top:311px;width:150px;height:21px;background:#e1e1e1;border:1px solid #adadad;"></div>
<svg class="r" style="left:809.9px;top:318.8px" width="9" height="5.5"><polyline points="0.5,0.5 4.5,4.5 8.5,0.5" fill="none" stroke="#404040" stroke-width="1.25"/></svg>
<div class="t" style="left:678.00px;top:315.64px;font-size:12.35px;font-weight:normal;font-style:normal;color:#000;transform:scaleX(0.9065)">MAIN</div>
<div class="t" style="left:832.00px;top:316.24px;font-size:12.35px;font-weight:normal;font-style:normal;color:#000;transform:scaleX(0.8542)">Created date</div>
<div class="r" style="left:899px;top:311px;width:100px;height:21px;background:#fff;border:1px solid #7a7a7a;"></div>
<div class="t" style="left:902.00px;top:316.24px;font-size:12.35px;font-weight:normal;font-style:normal;color:#000;transform:scaleX(0.9380)">02/10/2018</div>
<svg class="r" style="left:972px;top:315px" width="21" height="13" viewBox="0 0 21 13">
<rect x="0.5" y="0.5" width="10" height="11" rx="1.5" fill="#eef2fa" stroke="#6e6262"/>
<rect x="2" y="3" width="7" height="7" fill="#b4b8c4"/>
<path d="M3,4h1v1h-1zM5,4h1v1h-1zM7,4h1v1h-1zM3,6h1v1h-1zM5,6h1v1h-1zM7,6h1v1h-1zM3,8h1v1h-1zM5,8h1v1h-1zM7,8h1v1h-1z" fill="#fff"/>
<rect x="1" y="12" width="10" height="1" fill="#e0e0e0"/>
<path d="M13.1,4.1 L20.1,4.1 L16.6,8.5 Z" fill="#3b5a8a"/></svg>
<div class="t" style="left:617.00px;top:339.03px;font-size:13.66px;font-weight:bold;font-style:normal;color:#e67e22;transform:scaleX(0.8442)">Category</div>
<div class="r" style="left:674px;top:335px;width:150px;height:21px;background:#e1e1e1;border:1px solid #adadad;"></div>
<svg class="r" style="left:809.9px;top:342.8px" width="9" height="5.5"><polyline points="0.5,0.5 4.5,4.5 8.5,0.5" fill="none" stroke="#404040" stroke-width="1.25"/></svg>
<div class="t" style="left:678.00px;top:340.14px;font-size:12.35px;font-weight:normal;font-style:normal;color:#000;transform:scaleX(0.8665)">INGREDIENT</div>
<div class="r" style="left:832px;top:335px;width:63px;height:23px;background:#e1e1e1;border:1px solid #adadad;"></div>
<div class="t" style="left:838.00px;top:341.31px;font-size:11.92px;font-weight:normal;font-style:normal;color:#000;transform:scaleX(0.8702)">Max disc %</div>
<div class="r" style="left:899px;top:335px;width:100px;height:21px;background:#fff;border:1px solid #7a7a7a;"></div>
<div class="t" style="left:902.00px;top:340.47px;font-size:10.90px;font-weight:normal;font-style:normal;color:#000;transform:scaleX(1.0847)">0.00</div>
<div class="t" style="left:592.00px;top:362.63px;font-size:13.66px;font-weight:bold;font-style:normal;color:#e67e22;transform:scaleX(0.8665)">Sub category</div>
<div class="r" style="left:674px;top:359px;width:150px;height:21px;background:#e1e1e1;border:1px solid #adadad;"></div>
<svg class="r" style="left:809.9px;top:366.8px" width="9" height="5.5"><polyline points="0.5,0.5 4.5,4.5 8.5,0.5" fill="none" stroke="#404040" stroke-width="1.25"/></svg>
<div class="t" style="left:839.00px;top:365.31px;font-size:11.92px;font-weight:normal;font-style:normal;color:#000;transform:scaleX(0.8788)">Discount %</div>
<div class="r" style="left:899px;top:359px;width:100px;height:21px;background:#fff;border:1px solid #7a7a7a;"></div>
<div class="t" style="left:902.00px;top:364.04px;font-size:12.35px;font-weight:normal;font-style:normal;color:#000;transform:scaleX(0.8750)">0</div>
<div class="t" style="left:601.00px;top:388.29px;font-size:12.65px;font-weight:normal;font-style:normal;color:#000;transform:scaleX(0.8587)">Product Make</div>
<div class="r" style="left:674px;top:383px;width:150px;height:21px;background:#fff;border:1px solid #a8abb2;"></div>
<div class="r" style="left:805px;top:385px;width:17px;height:17px;background:#e1e1e1;border:1px solid #adadad;"></div>
<svg class="r" style="left:809.0px;top:391.6px" width="8.5" height="5.25"><polyline points="0.5,0.5 4.25,4.25 8.0,0.5" fill="none" stroke="#404040" stroke-width="1.25"/></svg>
<div class="t" style="left:834.00px;top:388.81px;font-size:11.92px;font-weight:normal;font-style:normal;color:#000;transform:scaleX(0.8564)">Serial or IME</div>
<div class="r" style="left:899px;top:383px;width:100px;height:21px;background:#e1e1e1;border:1px solid #adadad;"></div>
<svg class="r" style="left:984.9px;top:390.8px" width="9" height="5.5"><polyline points="0.5,0.5 4.5,4.5 8.5,0.5" fill="none" stroke="#404040" stroke-width="1.25"/></svg>
<div class="t" style="left:903.00px;top:388.59px;font-size:11.00px;font-weight:normal;font-style:normal;color:#000;transform:scaleX(1.0000)">no</div>
<div class="t" style="left:641.00px;top:412.90px;font-size:13.23px;font-weight:normal;font-style:normal;color:#000;transform:scaleX(0.9266)">VAT</div>
<div class="r" style="left:674px;top:409px;width:55px;height:21px;background:#e1e1e1;border:1px solid #adadad;"></div>
<svg class="r" style="left:714.9px;top:416.8px" width="9" height="5.5"><polyline points="0.5,0.5 4.5,4.5 8.5,0.5" fill="none" stroke="#404040" stroke-width="1.25"/></svg>
<div class="t" style="left:678.00px;top:414.79px;font-size:11.00px;font-weight:normal;font-style:normal;color:#000;transform:scaleX(1.0000)">yes</div>
<div class="t" style="left:742.00px;top:412.90px;font-size:13.23px;font-weight:normal;font-style:normal;color:#000;transform:scaleX(0.7627)">BOM</div>
<div class="r" style="left:769px;top:409px;width:55px;height:21px;background:#e1e1e1;border:1px solid #adadad;"></div>
<svg class="r" style="left:809.9px;top:416.8px" width="9" height="5.5"><polyline points="0.5,0.5 4.5,4.5 8.5,0.5" fill="none" stroke="#404040" stroke-width="1.25"/></svg>
<div class="t" style="left:773.00px;top:414.79px;font-size:11.00px;font-weight:normal;font-style:normal;color:#000;transform:scaleX(1.0000)">yes</div>
<div class="t" style="left:832.00px;top:413.81px;font-size:11.92px;font-weight:normal;font-style:normal;color:#000;transform:scaleX(0.8689)">Consignment</div>
<div class="r" style="left:899px;top:409px;width:100px;height:21px;background:#e1e1e1;border:1px solid #adadad;"></div>
<svg class="r" style="left:984.9px;top:416.8px" width="9" height="5.5"><polyline points="0.5,0.5 4.5,4.5 8.5,0.5" fill="none" stroke="#404040" stroke-width="1.25"/></svg>
<div class="t" style="left:903.00px;top:415.19px;font-size:11.00px;font-weight:normal;font-style:normal;color:#000;transform:scaleX(1.0000)">no</div>
<div class="t" style="left:642.00px;top:437.64px;font-size:12.35px;font-weight:bold;font-style:normal;color:#000;transform:scaleX(0.9346)">Sold</div>
<div class="r" style="left:675px;top:433px;width:149px;height:21px;background:#e1e1e1;border:1px solid #adadad;"></div>
<svg class="r" style="left:809.9px;top:440.8px" width="9" height="5.5"><polyline points="0.5,0.5 4.5,4.5 8.5,0.5" fill="none" stroke="#404040" stroke-width="1.25"/></svg>
<div class="t" style="left:680.00px;top:437.64px;font-size:12.35px;font-weight:normal;font-style:normal;color:#000;transform:scaleX(0.8337)">per 1 Kilogram</div>
<div class="t" style="left:837.00px;top:436.69px;font-size:12.65px;font-weight:normal;font-style:normal;color:#000;transform:scaleX(0.8297)">Credit O/S</div>
<div class="r" style="left:899px;top:433px;width:100px;height:21px;background:#f0f0f0;border:1px solid #7a7a7a;"></div>
<div class="t" style="left:903.00px;top:436.60px;font-size:11.34px;font-weight:bold;font-style:normal;color:#000;transform:scaleX(1.1337)">0.00</div>
<div class="t" style="left:597.00px;top:474.81px;font-size:11.92px;font-weight:normal;font-style:normal;color:#000;transform:scaleX(0.8698)">Items in a Case</div>
<div class="r" style="left:674px;top:469px;width:105px;height:21px;background:#fff;border:1px solid #7a7a7a;"></div>
<div class="t" style="left:678.00px;top:474.18px;font-size:11.48px;font-weight:bold;font-style:normal;color:#000;transform:scaleX(1.0984)">0</div>
<div class="r" style="left:832px;top:468px;width:63px;height:23px;background:#e1e1e1;border:1px solid #adadad;"></div>
<div class="t" style="left:839.00px;top:472.71px;font-size:13.81px;font-weight:bold;font-style:normal;color:#000080;transform:scaleX(0.8810)">QTY</div>
<svg class="r" style="left:872px;top:476px" width="16" height="10" shape-rendering="crispEdges"><rect x="6" y="0" width="3" height="1" fill="#000"/><rect x="9" y="1" width="1" height="1" fill="#000"/><rect x="6" y="1" width="3" height="1" fill="#ffff00"/><rect x="0" y="1" width="6" height="1" fill="#000"/><rect x="9" y="2" width="6" height="1" fill="#000"/><rect x="5" y="2" width="4" height="1" fill="#ffff00"/><rect x="4" y="2" width="1" height="1" fill="#000"/><rect x="3" y="2" width="1" height="1" fill="#00ffff"/><rect x="0" y="2" width="3" height="1" fill="#000"/><rect x="15" y="3" width="1" height="1" fill="#000"/><rect x="14" y="3" width="1" height="1" fill="#ffff00"/><rect x="13" y="3" width="1" height="1" fill="#ffffff"/><rect x="12" y="3" width="1" height="1" fill="#ffff00"/><rect x="11" y="3" width="1" height="1" fill="#ffffff"/><rect x="10" y="3" width="1" height="1" fill="#ffff00"/><rect x="9" y="3" width="1" height="1" fill="#ffffff"/><rect x="5" y="3" width="4" height="1" fill="#ffff00"/><rect x="4" y="3" width="1" height="1" fill="#000"/><rect x="3" y="3" width="1" height="1" fill="#00ffff"/><rect x="0" y="3" width="3" height="1" fill="#000"/><rect x="8" y="4" width="7" height="1" fill="#000"/><rect x="5" y="4" width="3" height="1" fill="#ffff00"/><rect x="4" y="4" width="1" height="1" fill="#000"/><rect x="3" y="4" width="1" height="1" fill="#00ffff"/><rect x="0" y="4" width="3" height="1" fill="#000"/><rect x="11" y="5" width="2" height="1" fill="#000"/><rect x="5" y="5" width="6" height="1" fill="#ffff00"/><rect x="4" y="5" width="1" height="1" fill="#000"/><rect x="3" y="5" width="1" height="1" fill="#00ffff"/><rect x="0" y="5" width="3" height="1" fill="#000"/><rect x="8" y="6" width="4" height="1" fill="#000"/><rect x="5" y="6" width="3" height="1" fill="#ffff00"/><rect x="4" y="6" width="1" height="1" fill="#000"/><rect x="3" y="6" width="1" height="1" fill="#00ffff"/><rect x="0" y="6" width="3" height="1" fill="#000"/><rect x="11" y="7" width="1" height="1" fill="#000"/><rect x="5" y="7" width="6" height="1" fill="#ffff00"/><rect x="4" y="7" width="1" height="1" fill="#000"/><rect x="3" y="7" width="1" height="1" fill="#00ffff"/><rect x="0" y="7" width="3" height="1" fill="#000"/><rect x="2" y="8" width="9" height="1" fill="#000"/><rect x="1" y="8" width="1" height="1" fill="#ffff00"/><rect x="0" y="8" width="1" height="1" fill="#000"/><rect x="0" y="9" width="3" height="1" fill="#000"/></svg>
<div class="r" style="left:899px;top:469px;width:100px;height:21px;background:#f0f0f0;border:1px solid #7a7a7a;"></div>
<div class="t" style="left:903.00px;top:472.43px;font-size:11.77px;font-weight:bold;font-style:normal;color:#000;transform:scaleX(1.0917)">3.00</div>
<div class="t" style="left:588.00px;top:502.29px;font-size:12.65px;font-weight:bold;font-style:normal;color:#e67e22;transform:scaleX(0.9502)">Cost excl VAT</div>
<div class="r" style="left:674px;top:497px;width:105px;height:21px;background:#fff;border:1px solid #7a7a7a;"></div>
<div class="t" style="left:678.00px;top:501.44px;font-size:12.35px;font-weight:bold;font-style:normal;color:#000;transform:scaleX(1.0299)">29.9833</div>
<div class="t" style="left:783.00px;top:500.42px;font-size:12.50px;font-weight:bold;font-style:normal;color:#e67e22;transform:scaleX(0.9677)">per 1kg</div>
<div class="t" style="left:854.00px;top:501.70px;font-size:11.34px;font-weight:normal;font-style:normal;color:#000;transform:scaleX(0.9373)">Qty Low</div>
<div class="r" style="left:899px;top:497px;width:100px;height:21px;background:#fff;border:1px solid #7a7a7a;"></div>
<div class="r" style="left:832px;top:526px;width:63px;height:23px;background:#e1e1e1;border:1px solid #adadad;"></div>
<div class="t" style="left:847.00px;top:532.04px;font-size:12.35px;font-weight:normal;font-style:normal;color:#000;transform:scaleX(0.8786)">AVG C</div>
<div class="r" style="left:899px;top:527px;width:100px;height:21px;background:#bebebe;border:1px solid #7a7a7a;box-shadow:inset 0 0 0 1px #fff"></div>
<div class="r" style="left:832px;top:560px;width:63px;height:23px;background:#e1e1e1;border:1px solid #adadad;"></div>
<div class="t" style="left:844.00px;top:566.05px;font-size:12.94px;font-weight:normal;font-style:normal;color:#000;transform:scaleX(0.8301)">Barcode</div>
<div class="r" style="left:899px;top:561px;width:100px;height:21px;background:#f0c896;border:1px solid #7a7a7a;box-shadow:inset 0 0 0 1px #fff"></div>
<div class="r" style="left:899px;top:581px;width:100px;height:21px;background:#f0c896;border:1px solid #7a7a7a;box-shadow:inset 0 0 0 1px #fff"></div>
<div class="r" style="left:899px;top:601px;width:100px;height:21px;background:#f0c896;border:1px solid #7a7a7a;box-shadow:inset 0 0 0 1px #fff"></div>
<div class="r" style="left:899px;top:621px;width:100px;height:21px;background:#f0c896;border:1px solid #7a7a7a;box-shadow:inset 0 0 0 1px #fff"></div>
<div class="t" style="left:857.00px;top:586.32px;font-size:12.50px;font-weight:normal;font-style:normal;color:#000;transform:scaleX(0.8495)">Part No</div>
<div class="t" style="left:845.00px;top:606.24px;font-size:12.35px;font-weight:normal;font-style:normal;color:#000;transform:scaleX(0.8418)">Item Code</div>
<div class="t" style="left:844.00px;top:625.94px;font-size:12.35px;font-weight:normal;font-style:normal;color:#000;transform:scaleX(0.8394)">Cost Code</div>
<div class="t" style="left:781.00px;top:622.62px;font-size:12.50px;font-weight:bold;font-style:normal;color:#000;transform:scaleX(0.9451)">per 1kg</div>
<div class="r" style="left:799px;top:668px;width:13px;height:13px;background:#fff;border:1px solid #333;"></div>
<div class="t" style="left:816.00px;top:669.14px;font-size:12.35px;font-weight:normal;font-style:normal;color:#000;transform:scaleX(0.8476)">Add to label list</div>
<div class="r" style="left:899px;top:647px;width:101px;height:56px;background:#fff;border:1px solid #c3c3c3;border-radius:4px;"></div>
<div class="t" style="left:904.00px;top:666.36px;font-size:17.88px;font-weight:bold;font-style:normal;color:#f5a31a;transform:scaleX(0.9582)">Save</div>
<svg class="r" style="left:958px;top:662px" width="32" height="22"><polyline points="3.5,11.5 10,18.5 28.5,5" fill="none" stroke="#f5a31a" stroke-width="3.6"/></svg>
<div class="r" style="left:581px;top:702px;width:318px;height:1px;background:#a0a0a0;"></div>
<div class="r" style="left:1000px;top:702px;width:11px;height:1px;background:#a0a0a0;"></div>
<div class="r" style="left:211px;top:705px;width:801px;height:2px;background:#f0f0f0;"></div>
<div class="r" style="left:210px;top:707px;width:802px;height:1px;background:#1883d7;"></div>
<div class="r" style="left:207px;top:150px;width:374px;height:559px;border:5px solid #ed1c24"></div>
</body></html>
